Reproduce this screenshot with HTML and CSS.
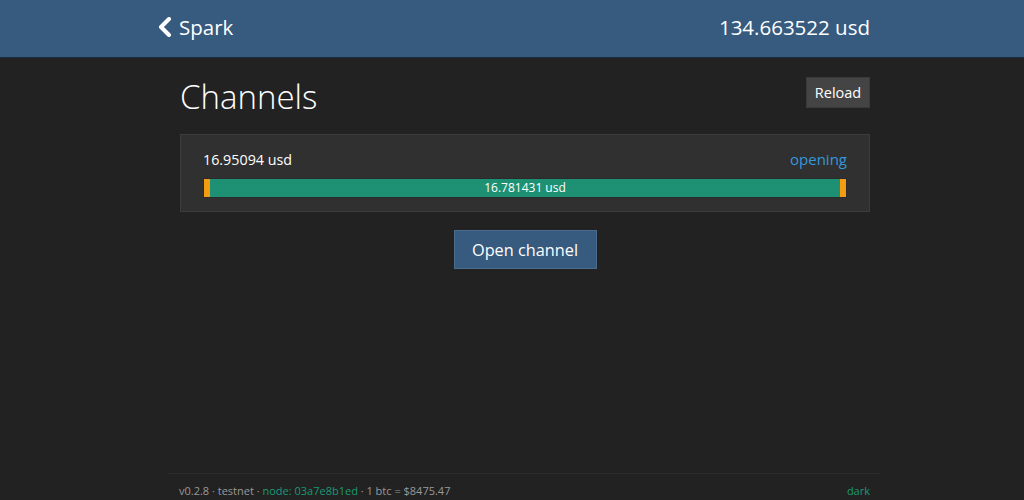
FILE: index.html
```html
<!DOCTYPE html>
<html>
<head>
<meta charset="utf-8">
<link rel="stylesheet" href="styles.css">
</head>
<body>
<header class="navbar">
  <div class="nav-inner">
    <a class="brand"><svg class="chev" viewBox="0 0 14 20" width="14" height="20"><path d="M11 2 L3 10 L11 18" fill="none" stroke="#fff" stroke-width="4" stroke-linecap="round" stroke-linejoin="round"/></svg>Spark</a>
    <span class="balance">134.663522 usd</span>
  </div>
</header>
<main class="container">
  <div class="title-row">
    <h1>Channels</h1>
    <button class="btn-reload">Reload</button>
  </div>
  <div class="card">
    <div class="card-top">
      <span class="amount">16.95094 usd</span>
      <span class="status">opening</span>
    </div>
    <div class="progress">
      <div class="edge"></div>
      <div class="bar">16.781431 usd</div>
      <div class="edge"></div>
    </div>
  </div>
  <div class="actions">
    <button class="btn-open">Open channel</button>
  </div>
</main>
<footer class="footer">
  <div class="footer-inner">
    <span>v0.2.8 · testnet · <span class="green">node: 03a7e8b1ed</span> · 1 btc = $8475.47</span>
    <span class="green">dark</span>
  </div>
</footer>
</body>
</html>
```

FILE: styles.css
```css
* { box-sizing: border-box; }
html, body { height: 100%; }
body {
  margin: 0;
  background: #222222;
  color: #ffffff;
  font-family: "Open Sans", "Noto Sans", sans-serif;
  display: flex;
  flex-direction: column;
  overflow: hidden;
}
.navbar {
  background: #375a7f;
  height: 58px;
  border-bottom: 1px solid #1c2b3b;
  flex: none;
}
.nav-inner {
  width: 714px;
  margin-left: calc(50% - 344px);
  height: 57px;
  padding-bottom: 3px;
  display: flex;
  align-items: center;
  justify-content: space-between;
}
.brand {
  display: flex;
  align-items: center;
  font-size: 20.5px;
  color: #fff;
  gap: 7px;
  margin-left: -10px;
}
.balance {
  font-size: 20.5px;
  color: #fff;
  margin-right: 12px;
}
.container {
  width: 690px;
  margin-left: calc(50% - 332px);
  flex: 1;
}
.title-row {
  display: flex;
  justify-content: space-between;
  align-items: flex-start;
  margin-top: 18px;
}
h1 {
  margin: 0;
  font-size: 33px;
  font-weight: 300;
  line-height: 42px;
}
.btn-reload {
  margin-top: 1px;
  background: #444444;
  color: #fff;
  border: 1px solid #3a3a3a;
  font-family: inherit;
  font-size: 14.5px;
  height: 31px;
  width: 64px;
  padding: 0;
}
.card {
  margin-top: 16px;
  background: #303030;
  border: 1px solid #3c3c3c;
  padding: 11px 22px 13px 22px;
}
.card-top {
  display: flex;
  justify-content: space-between;
  align-items: center;
  height: 26px;
}
.amount { font-size: 14.3px; }
.status { font-size: 15px; color: #3498db; }
.progress {
  margin-top: 6px;
  height: 20px;
  display: flex;
  border: 1px solid #2a2a2a;
}
.edge { width: 6px; background: #f39c12; }
.bar {
  flex: 1;
  background: #1e9174;
  font-size: 12px;
  text-align: center;
  line-height: 18px;
}
.actions {
  display: flex;
  justify-content: center;
  margin-top: 18px;
}
.btn-open {
  background: #375a7f;
  color: #fff;
  border: 1px solid #4b6c8f;
  font-family: inherit;
  font-size: 16.3px;
  height: 39px;
  width: 143px;
}
.footer { flex: none; }
.footer-inner {
  width: 713px;
  margin-left: calc(50% - 344px);
  border-top: 1px solid #2c2c2c;
  height: 27px;
  display: flex;
  justify-content: space-between;
  align-items: center;
  padding: 6px 11px 0 11px;
  font-size: 11px;
  color: #999;
}
.green { color: #1a9a73; }
```
